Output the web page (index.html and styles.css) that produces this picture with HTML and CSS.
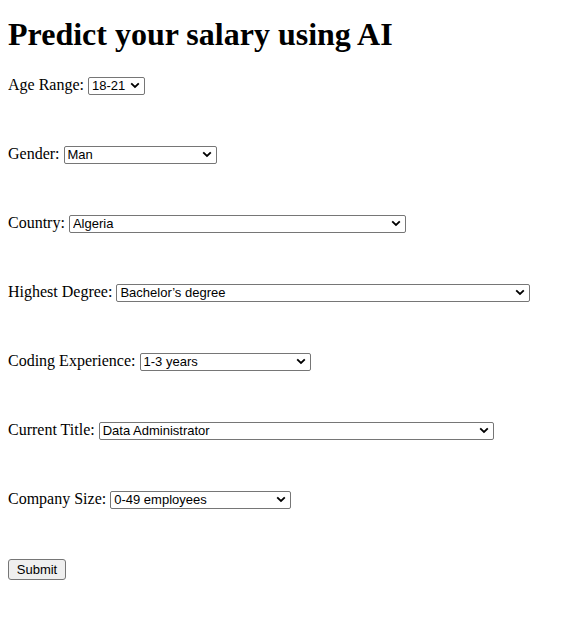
FILE: index.html
```html
<!DOCTYPE html>
<html>
<head>
<meta charset="utf-8">
<title>Predict your salary using AI</title>
<link rel="stylesheet" href="styles.css">
</head>
<body>
<h1 class="title">Predict your salary using AI</h1>
<form class="form">
  <div class="row"><label class="label" for="age">Age Range:</label> <select class="sel w-age" id="age"><option>18-21</option></select></div>
  <div class="row"><label class="label" for="gender">Gender:</label> <select class="sel w-gender" id="gender"><option>Man</option></select></div>
  <div class="row"><label class="label" for="country">Country:</label> <select class="sel w-country" id="country"><option>Algeria</option></select></div>
  <div class="row"><label class="label" for="degree">Highest Degree:</label> <select class="sel w-degree" id="degree"><option>Bachelor’s degree</option></select></div>
  <div class="row"><label class="label" for="exp">Coding Experience:</label> <select class="sel w-exp" id="exp"><option>1-3 years</option></select></div>
  <div class="row"><label class="label" for="titlef">Current Title:</label> <select class="sel w-title" id="titlef"><option>Data Administrator</option></select></div>
  <div class="row"><label class="label" for="size">Company Size:</label> <select class="sel w-size" id="size"><option>0-49 employees</option></select></div>
  <div class="row-btn"><button class="btn" type="submit">Submit</button></div>
</form>
</body>
</html>
```
FILE: styles.css
```css
html, body {
  background: #ffffff;
}
body {
  margin: 8px;
  font-family: "Liberation Serif", "Times New Roman", serif;
  font-size: 16px;
  color: #000;
}
.title {
  font-size: 32px;
  font-weight: bold;
  line-height: 37px;
  margin: 8px 0 23px;
}
.form {
  display: flex;
  flex-direction: column;
  gap: 51px;
}
.row {
  line-height: 18px;
  height: 18px;
}
.row-btn {
  line-height: 21px;
}
.label {
  font-family: "Liberation Serif", "Times New Roman", serif;
}
.sel {
  -webkit-appearance: none;
  appearance: none;
  box-sizing: border-box;
  height: 18px;
  font-family: "Liberation Sans", Arial, sans-serif;
  font-size: 13px;
  color: #000;
  background-color: #fff;
  border: 1px solid #767676;
  border-radius: 2px;
  padding: 0 16px 0 3px;
  margin: 0;
  background-image: url("data:image/svg+xml,%3Csvg xmlns='http://www.w3.org/2000/svg' width='10' height='7' viewBox='0 0 10 7'%3E%3Cpath d='M1.2 1.3 L5 5 L8.8 1.3' fill='none' stroke='%23000' stroke-width='1.8'/%3E%3C/svg%3E");
  background-repeat: no-repeat;
  background-position: right 4px center;
  background-size: 10px 7px;
  vertical-align: baseline;
}
.w-age { width: 57px; }
.w-gender { width: 153px; }
.w-country { width: 337px; }
.w-degree { width: 414px; }
.w-exp { width: 171px; }
.w-title { width: 395px; }
.w-size { width: 181px; }
.btn {
  font-family: "Liberation Sans", Arial, sans-serif;
  font-size: 13px;
  color: #000;
  background: #efefef;
  border: 1px solid #767676;
  border-radius: 3px;
  height: 21px;
  width: 58px;
  padding: 0;
  margin: 0;
  vertical-align: top;
}
```
